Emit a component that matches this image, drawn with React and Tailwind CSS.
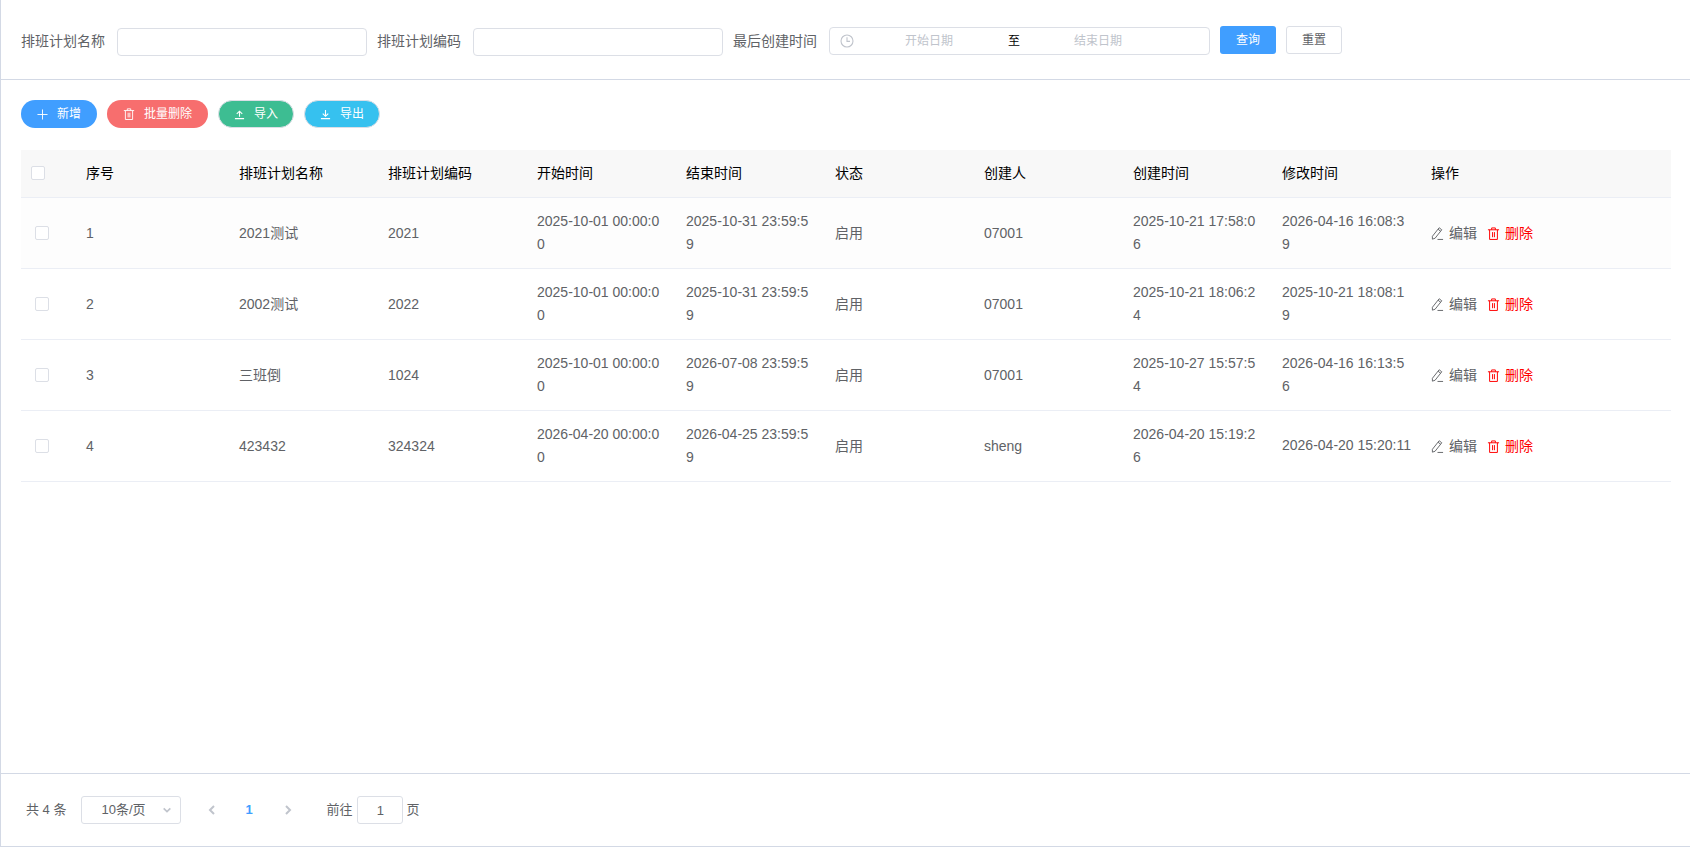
import React from "react";

const FONT = "font-['Liberation_Sans','Noto_Sans_CJK_SC',sans-serif]";

const IconPlus = ({ className = "" }) => (
  <svg viewBox="0 0 12 12" className={className} fill="none" stroke="currentColor" strokeWidth="1">
    <path d="M6 .5v11M.5 6h11" />
  </svg>
);
const IconTrash = ({ className = "" }) => (
  <svg viewBox="0 0 14 14" className={className} fill="none" stroke="currentColor" strokeWidth="1.05">
    <path d="M1 3h12M5 3V1h4v2M2.8 3v10.4h8.4V3M6 5.5v5.5M8 5.5v5.5" />
  </svg>
);
const IconUpload = ({ className = "" }) => (
  <svg viewBox="0 0 12 12" className={className} fill="none" stroke="currentColor" strokeWidth="1.2">
    <path d="M1 10.5h10M6 8.5V2.5M3 5.4 6 2.4l3 3" />
  </svg>
);
const IconDownload = ({ className = "" }) => (
  <svg viewBox="0 0 12 12" className={className} fill="none" stroke="currentColor" strokeWidth="1.2">
    <path d="M1 10.5h10M6 1v7M3 5 6 8l3-3" />
  </svg>
);
const IconClock = ({ className = "" }) => (
  <svg viewBox="0 0 14 14" className={className} fill="none" stroke="currentColor" strokeWidth="1.1">
    <circle cx="7" cy="7" r="6" />
    <path d="M7 3.2V7.4h3" />
  </svg>
);
const IconEdit = ({ className = "" }) => (
  <svg viewBox="0 0 14 14" className={className} fill="none" stroke="currentColor" strokeWidth="1">
    <path d="M1.5 10 8.8.8l2.8 2.2-7.2 9.1-2.9 1zM7.6 2.4l2.8 2.2M7 13.4h6" />
  </svg>
);
const Chevron = ({ d, className = "" }) => (
  <svg viewBox="0 0 12 12" className={className} fill="none" stroke="currentColor" strokeWidth="2">
    <path d={d} />
  </svg>
);

const Checkbox = ({ className = "" }) => (
  <span className={"block w-[14px] h-[14px] bg-white border border-[#dcdfe6] rounded-[2px] " + className} />
);

const Label = ({ children, className = "" }) => (
  <label className={"text-[14px] text-[#606266] whitespace-nowrap " + className}>{children}</label>
);

const TextInput = ({ className = "" }) => (
  <input className={"h-[28px] w-[250px] border border-[#dcdfe6] rounded-[4px] bg-white outline-none " + className} />
);

const ActionButton = ({ color, width, icon, children, bordered }) => (
  <button
    className={
      "h-[28px] rounded-full flex items-center justify-center gap-[9px] text-[12px] text-white " +
      color + " " + width + " " + (bordered ? "border border-[#dcdfe6]" : "")
    }
  >
    {icon}
    <span>{children}</span>
  </button>
);

const rows = [
  ["1", "2021测试", "2021", "2025-10-01 00:00:00", "2025-10-31 23:59:59", "启用", "07001", "2025-10-21 17:58:06", "2026-04-16 16:08:39"],
  ["2", "2002测试", "2022", "2025-10-01 00:00:00", "2025-10-31 23:59:59", "启用", "07001", "2025-10-21 18:06:24", "2025-10-21 18:08:19"],
  ["3", "三班倒", "1024", "2025-10-01 00:00:00", "2026-07-08 23:59:59", "启用", "07001", "2025-10-27 15:57:54", "2026-04-16 16:13:56"],
  ["4", "423432", "324324", "2026-04-20 00:00:00", "2026-04-25 23:59:59", "启用", "sheng", "2026-04-20 15:19:26", "2026-04-20 15:20:11"],
];
const headers = ["序号", "排班计划名称", "排班计划编码", "开始时间", "结束时间", "状态", "创建人", "创建时间", "修改时间", "操作"];

export default function App() {
  return (
    <div className={"h-[848px] w-[1690px] bg-white overflow-hidden " + FONT}>
      <div className="h-[847px] flex flex-col border-l border-b border-[#d3d9e5]">
        {/* filter */}
        <div className="h-[80px] shrink-0 border-b border-[#d3d9e5] flex items-center pl-[20px] pt-[3px]">
          <Label>排班计划名称</Label>
          <TextInput className="ml-[12px] mt-[2px]" />
          <Label className="ml-[10px]">排班计划编码</Label>
          <TextInput className="ml-[12px] mt-[2px]" />
          <Label className="ml-[10px]">最后创建时间</Label>
          <div className="ml-[12px] w-[381px] h-[28px] border border-[#dcdfe6] rounded-[4px] flex items-center pl-[10px] text-[12px]">
            <IconClock className="w-[14px] h-[14px] text-[#c0c4cc] shrink-0" />
            <input placeholder="开始日期" className="w-[150px] text-center outline-none placeholder:text-[#c0c4cc]" />
            <span className="w-[20px] text-center text-black">至</span>
            <input placeholder="结束日期" className="ml-[1px] w-[146px] text-center outline-none placeholder:text-[#c0c4cc]" />
          </div>
          <button className="ml-[10px] mb-[2px] w-[56px] h-[28px] rounded-[3px] bg-[#409eff] text-white text-[12px]">查询</button>
          <button className="ml-[10px] mb-[2px] w-[56px] h-[28px] rounded-[3px] bg-white border border-[#dcdfe6] text-[#606266] text-[12px]">重置</button>
        </div>

        {/* main */}
        <div className="flex-1 min-h-0 pl-[20px] pr-[18px] pt-[20px]">
          <div className="flex gap-[10px]">
            <ActionButton color="bg-[#409eff]" width="w-[76px]" icon={<IconPlus className="w-[11px] h-[11px]" />}>新增</ActionButton>
            <ActionButton color="bg-[#f76e6e]" width="w-[101px]" icon={<IconTrash className="w-[12px] h-[12px]" />}>批量删除</ActionButton>
            <ActionButton bordered color="bg-[#3dbd92]" width="w-[76px]" icon={<IconUpload className="w-[11px] h-[11px]" />}>导入</ActionButton>
            <ActionButton bordered color="bg-[#36c1ef]" width="w-[76px]" icon={<IconDownload className="w-[11px] h-[11px]" />}>导出</ActionButton>
          </div>

          <table className="mt-[22px] w-[1650px] table-fixed border-collapse text-[14px]">
            <colgroup>
              <col className="w-[55px]" />
              <col className="w-[153px]" />
              <col className="w-[149px]" />
              <col className="w-[149px]" />
              <col className="w-[149px]" />
              <col className="w-[149px]" />
              <col className="w-[149px]" />
              <col className="w-[149px]" />
              <col className="w-[149px]" />
              <col className="w-[149px]" />
              <col />
            </colgroup>
            <thead>
              <tr className="h-[47px] bg-[#f8f8f8] border-b border-[#ebeef5]">
                <th className="pl-[10px] font-normal text-left">
                  <Checkbox />
                </th>
                {headers.map((h) => (
                  <th key={h} className="px-[10px] font-normal text-left text-black">{h}</th>
                ))}
              </tr>
            </thead>
            <tbody>
              {rows.map((r, i) => (
                <tr key={r[0]} className={"h-[71px] border-b border-[#ebeef5] " + (i === 0 ? "bg-[#fdfdfd]" : "bg-white")}>
                  <td className="pl-[14px]"><Checkbox /></td>
                  {r.map((c, j) => (
                    <td
                      key={j}
                      className={
                        "px-[10px] text-[#606266] leading-[23px] break-all " +
                        (c.length < 10 ? "pt-[14px] pb-[12px]" : "py-[12px]")
                      }
                    >
                      {c}
                    </td>
                  ))}
                  <td className="px-[10px] pt-[1px]">
                    <div className="flex items-center text-[14px]">
                      <IconEdit className="w-[13px] h-[13px] text-[#606266]" />
                      <span className="ml-[5px] text-[#606266]">编辑</span>
                      <IconTrash className="ml-[10px] w-[13px] h-[13px] text-[#ff0000]" />
                      <span className="ml-[5px] text-[#ff0000]">删除</span>
                    </div>
                  </td>
                </tr>
              ))}
            </tbody>
          </table>
        </div>

        {/* pagination */}
        <div className="h-[73px] shrink-0 border-t border-[#d3d9e5] flex items-center pl-[25px] text-[13px] text-[#606266]">
          <span>共 4 条</span>
          <div className="relative ml-[15px] w-[100px] h-[28px] border border-[#dcdfe6] rounded-[3px] flex items-center pl-[19px]">
            <span>10条/页</span>
            <Chevron d="M2 4l4 4 4-4" className="absolute right-[8px] top-[8px] w-[10px] h-[10px] text-[#c0c4cc]" />
          </div>
          <Chevron d="M8 2 4 6l4 4" className="ml-[25px] w-[12px] h-[12px] text-[#c0c4cc]" />
          <span className="ml-[27px] w-[9px] text-[#409eff] font-bold">1</span>
          <Chevron d="M4 2l4 4-4 4" className="ml-[28px] w-[12px] h-[12px] text-[#c0c4cc]" />
          <span className="ml-[32px]">前往</span>
          <input defaultValue="1" className="ml-[5px] w-[46px] h-[28px] border border-[#dcdfe6] rounded-[3px] text-center outline-none" />
          <span className="ml-[3px]">页</span>
        </div>
      </div>
    </div>
  );
}
